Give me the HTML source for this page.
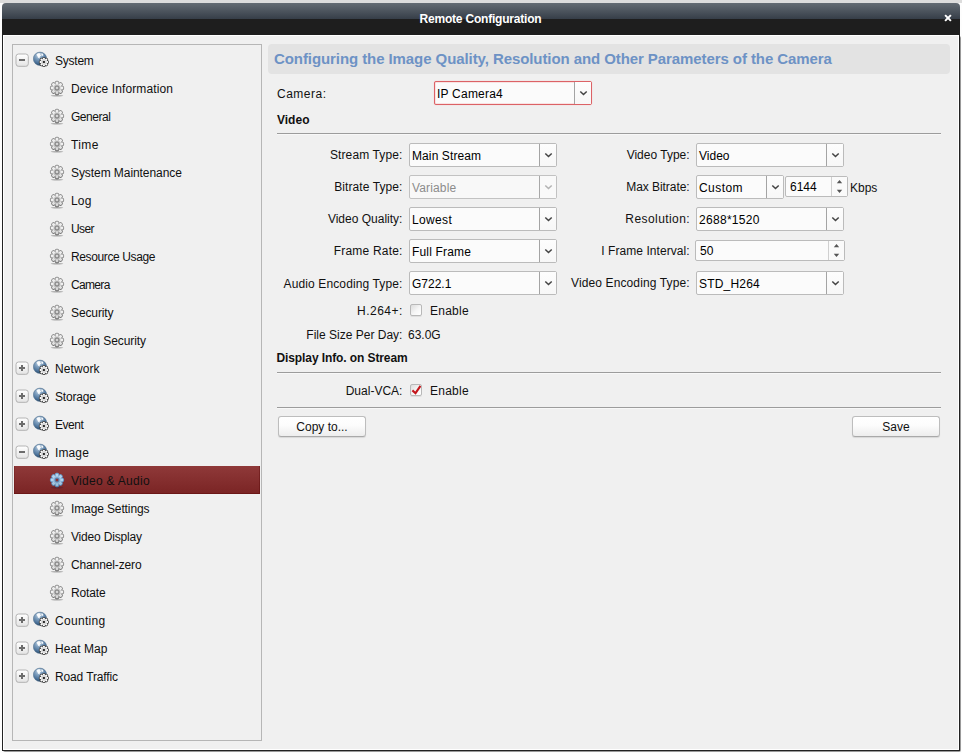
<!DOCTYPE html>
<html>
<head>
<meta charset="utf-8">
<title>Remote Configuration</title>
<style>
*{box-sizing:border-box;margin:0;padding:0}
html,body{width:962px;height:753px;overflow:hidden;background:#fdfdfd;font-family:"Liberation Sans",sans-serif;font-size:12px;color:#000}
.abs{position:absolute}
#topstrip{left:0;top:0;width:962px;height:3px;background:#dcdcdc}
#win{left:2px;top:3px;width:958px;height:748px;background:#f0f0f0;border-radius:4px 4px 0 0;overflow:hidden}
#winsh{left:3px;top:36px;width:958px;height:716px;background:#9a9a9a;border-radius:2px}
#win:before{content:"";position:absolute;left:0;top:32px;right:0;bottom:0;border:1px solid #222;border-top:none;box-shadow:inset 0 1px 0 #fff,inset 1px 0 0 #fff,inset -1px 0 0 #fff,inset 0 -1px 0 #fff}
#tb1{left:0;top:0;width:100%;height:16px;background:linear-gradient(#636b73,#363e48)}
#tb2{left:0;top:16px;width:100%;height:16px;background:#1e1e1e}
#title{left:0;top:9px;width:957px;text-align:center;color:#fff;font-weight:bold;font-size:12px;line-height:14px;letter-spacing:-0.2px}
#close{left:941.5px;top:11.1px;width:8px;height:8px}
#side{left:12px;top:44px;width:250px;height:697px;border:1px solid #b6b6b6;background:#f0f0f0}
.row{position:absolute;left:1px;width:246px;height:28px;line-height:28px;font-size:12px;color:#111;white-space:nowrap}
.row.sel{background:linear-gradient(#8f3939,#7a2424);box-shadow:inset -1px -1px 0 rgba(80,0,0,.35),inset 1px 0 0 rgba(80,0,0,.2)}
.row span{position:absolute;top:1px}
.p span{left:41px}
.c span{left:57px}
.exp{position:absolute;left:0;top:6px;width:18px;height:18px}
.globe{position:absolute;left:19px;top:5px;width:18px;height:18px}
.gear{position:absolute;left:35px;top:6px;width:16px;height:17px}
#banner{left:268px;top:44px;width:682px;height:30px;background:#e3e3e3;border-radius:4px;color:#6d92c5;font-weight:bold;font-size:15px;line-height:30px;padding-left:6px;white-space:nowrap;letter-spacing:-0.081px}
.lbl{position:absolute;height:20px;line-height:20px;white-space:nowrap;color:#111}
.r{text-align:right}
.h{font-weight:bold}
.hr{position:absolute;height:2px;border-top:1px solid #9c9c9c;border-bottom:1px solid #f8f8f8}
.sel2{position:absolute;height:24px;border:1px solid #bbb;border-radius:2px;background:#fbfbfb;line-height:25px;padding-left:2px;white-space:nowrap;color:#000}
.sel2 .a{position:absolute;right:0;top:0;width:17px;height:22px;border-left:1px solid #a4a4a4;background:linear-gradient(#fdfdfd,#f7f7f7)}
.sel2 .a svg{position:absolute;left:4px;top:8px}
.sel2.cam{border-color:#dc6266;box-shadow:0 0 1px 0 #eeaaaa,inset 0 0 0 1px #f9e3e3}
.sel2.dis{color:#8c8c8c;background:#f8f8f8;border-color:#c2c2c2}
.sel2.dis .a{background:#f9f9f9;border-left-color:#a8a8a8}
.sel2.dis .a svg{opacity:.38}
.spin{position:absolute;height:21px;border:1px solid #bbb;border-radius:2px;background:#fbfbfb;line-height:21px;padding-left:4px}
.spin .s{position:absolute;right:0;top:0;width:16px;height:19px;border-left:1px solid #d0d0d0;background:#fafafa}
.cb{position:absolute;width:12px;height:12px;border:1px solid #b8b8b8;border-radius:2px;background:linear-gradient(135deg,#dcdcdc,#f6f6f6 55%,#fff);box-shadow:0 1px 0 rgba(0,0,0,.07)}
.btn{position:absolute;height:21px;border:1px solid #bdbdbd;border-bottom-color:#a9a9a9;border-radius:3px;background:linear-gradient(#fff,#fcfcfc 45%,#ededed);box-shadow:0 1px 1px rgba(0,0,0,.10);text-align:center;line-height:21px;color:#111}
</style>
</head>
<body>
<div class="abs" id="topstrip"></div>
<div class="abs" id="winsh"></div>
<div class="abs" id="win">
  <div class="abs" id="tb1"></div>
  <div class="abs" id="tb2"></div>
  <div class="abs" id="title">Remote Configuration</div>
  <svg class="abs" id="close" viewBox="0 0 8 8"><path d="M1.1 1.1L6.9 6.9M6.9 1.1L1.1 6.9" stroke="#fff" stroke-width="2"/></svg>
</div>
<div class="abs" id="side">
<svg width="0" height="0" style="position:absolute"><defs><radialGradient id="gg" cx="0.4" cy="0.25" r="0.8"><stop offset="0" stop-color="#c3d3e2"/><stop offset="0.35" stop-color="#7b9cbc"/><stop offset="0.7" stop-color="#4a7199"/><stop offset="1" stop-color="#243f5a"/></radialGradient><symbol id="gear" viewBox="-8 -8 16 17"><clipPath id="cpgear"><path d="M-2.3 -2.6L-2.3 -5.48Q-2.3 -7.2 -0.57 -7.2L0.57 -7.2Q2.3 -7.2 2.3 -5.48L2.3 -2.6Z" transform="rotate(0.0)"/><path d="M-2.3 -2.6L-2.3 -5.48Q-2.3 -7.2 -0.57 -7.2L0.57 -7.2Q2.3 -7.2 2.3 -5.48L2.3 -2.6Z" transform="rotate(45.0)"/><path d="M-2.3 -2.6L-2.3 -5.48Q-2.3 -7.2 -0.57 -7.2L0.57 -7.2Q2.3 -7.2 2.3 -5.48L2.3 -2.6Z" transform="rotate(90.0)"/><path d="M-2.3 -2.6L-2.3 -5.48Q-2.3 -7.2 -0.57 -7.2L0.57 -7.2Q2.3 -7.2 2.3 -5.48L2.3 -2.6Z" transform="rotate(135.0)"/><path d="M-2.3 -2.6L-2.3 -5.48Q-2.3 -7.2 -0.57 -7.2L0.57 -7.2Q2.3 -7.2 2.3 -5.48L2.3 -2.6Z" transform="rotate(180.0)"/><path d="M-2.3 -2.6L-2.3 -5.48Q-2.3 -7.2 -0.57 -7.2L0.57 -7.2Q2.3 -7.2 2.3 -5.48L2.3 -2.6Z" transform="rotate(225.0)"/><path d="M-2.3 -2.6L-2.3 -5.48Q-2.3 -7.2 -0.57 -7.2L0.57 -7.2Q2.3 -7.2 2.3 -5.48L2.3 -2.6Z" transform="rotate(270.0)"/><path d="M-2.3 -2.6L-2.3 -5.48Q-2.3 -7.2 -0.57 -7.2L0.57 -7.2Q2.3 -7.2 2.3 -5.48L2.3 -2.6Z" transform="rotate(315.0)"/><circle r="4"/></clipPath><ellipse cx="0" cy="7.75" rx="6.3" ry="0.65" fill="#000" opacity="0.3"/><g stroke="#858585" stroke-width="1.7" fill="#858585" stroke-linejoin="round"><path d="M-1.4 -2.6L-1.4 -5.25Q-1.4 -6.3 -0.35 -6.3L0.35 -6.3Q1.4 -6.3 1.4 -5.25L1.4 -2.6Z" transform="rotate(0.0)"/><path d="M-1.4 -2.6L-1.4 -5.25Q-1.4 -6.3 -0.35 -6.3L0.35 -6.3Q1.4 -6.3 1.4 -5.25L1.4 -2.6Z" transform="rotate(45.0)"/><path d="M-1.4 -2.6L-1.4 -5.25Q-1.4 -6.3 -0.35 -6.3L0.35 -6.3Q1.4 -6.3 1.4 -5.25L1.4 -2.6Z" transform="rotate(90.0)"/><path d="M-1.4 -2.6L-1.4 -5.25Q-1.4 -6.3 -0.35 -6.3L0.35 -6.3Q1.4 -6.3 1.4 -5.25L1.4 -2.6Z" transform="rotate(135.0)"/><path d="M-1.4 -2.6L-1.4 -5.25Q-1.4 -6.3 -0.35 -6.3L0.35 -6.3Q1.4 -6.3 1.4 -5.25L1.4 -2.6Z" transform="rotate(180.0)"/><path d="M-1.4 -2.6L-1.4 -5.25Q-1.4 -6.3 -0.35 -6.3L0.35 -6.3Q1.4 -6.3 1.4 -5.25L1.4 -2.6Z" transform="rotate(225.0)"/><path d="M-1.4 -2.6L-1.4 -5.25Q-1.4 -6.3 -0.35 -6.3L0.35 -6.3Q1.4 -6.3 1.4 -5.25L1.4 -2.6Z" transform="rotate(270.0)"/><path d="M-1.4 -2.6L-1.4 -5.25Q-1.4 -6.3 -0.35 -6.3L0.35 -6.3Q1.4 -6.3 1.4 -5.25L1.4 -2.6Z" transform="rotate(315.0)"/></g><g fill="#f3f3f3"><path d="M-1.4 -2.6L-1.4 -5.25Q-1.4 -6.3 -0.35 -6.3L0.35 -6.3Q1.4 -6.3 1.4 -5.25L1.4 -2.6Z" transform="rotate(0.0)"/><path d="M-1.4 -2.6L-1.4 -5.25Q-1.4 -6.3 -0.35 -6.3L0.35 -6.3Q1.4 -6.3 1.4 -5.25L1.4 -2.6Z" transform="rotate(45.0)"/><path d="M-1.4 -2.6L-1.4 -5.25Q-1.4 -6.3 -0.35 -6.3L0.35 -6.3Q1.4 -6.3 1.4 -5.25L1.4 -2.6Z" transform="rotate(90.0)"/><path d="M-1.4 -2.6L-1.4 -5.25Q-1.4 -6.3 -0.35 -6.3L0.35 -6.3Q1.4 -6.3 1.4 -5.25L1.4 -2.6Z" transform="rotate(135.0)"/><path d="M-1.4 -2.6L-1.4 -5.25Q-1.4 -6.3 -0.35 -6.3L0.35 -6.3Q1.4 -6.3 1.4 -5.25L1.4 -2.6Z" transform="rotate(180.0)"/><path d="M-1.4 -2.6L-1.4 -5.25Q-1.4 -6.3 -0.35 -6.3L0.35 -6.3Q1.4 -6.3 1.4 -5.25L1.4 -2.6Z" transform="rotate(225.0)"/><path d="M-1.4 -2.6L-1.4 -5.25Q-1.4 -6.3 -0.35 -6.3L0.35 -6.3Q1.4 -6.3 1.4 -5.25L1.4 -2.6Z" transform="rotate(270.0)"/><path d="M-1.4 -2.6L-1.4 -5.25Q-1.4 -6.3 -0.35 -6.3L0.35 -6.3Q1.4 -6.3 1.4 -5.25L1.4 -2.6Z" transform="rotate(315.0)"/></g><circle r="3.5" fill="#c2c2c2"/><circle r="2" fill="#d6d6d6" stroke="#787878" stroke-width="1"/><rect x="-8" y="-8" width="16" height="16" fill="url(#shg)" clip-path="url(#cpgear)"/></symbol><symbol id="gearsel" viewBox="-8 -8 16 17"><clipPath id="cpgearsel"><path d="M-2.3 -2.6L-2.3 -5.48Q-2.3 -7.2 -0.57 -7.2L0.57 -7.2Q2.3 -7.2 2.3 -5.48L2.3 -2.6Z" transform="rotate(0.0)"/><path d="M-2.3 -2.6L-2.3 -5.48Q-2.3 -7.2 -0.57 -7.2L0.57 -7.2Q2.3 -7.2 2.3 -5.48L2.3 -2.6Z" transform="rotate(45.0)"/><path d="M-2.3 -2.6L-2.3 -5.48Q-2.3 -7.2 -0.57 -7.2L0.57 -7.2Q2.3 -7.2 2.3 -5.48L2.3 -2.6Z" transform="rotate(90.0)"/><path d="M-2.3 -2.6L-2.3 -5.48Q-2.3 -7.2 -0.57 -7.2L0.57 -7.2Q2.3 -7.2 2.3 -5.48L2.3 -2.6Z" transform="rotate(135.0)"/><path d="M-2.3 -2.6L-2.3 -5.48Q-2.3 -7.2 -0.57 -7.2L0.57 -7.2Q2.3 -7.2 2.3 -5.48L2.3 -2.6Z" transform="rotate(180.0)"/><path d="M-2.3 -2.6L-2.3 -5.48Q-2.3 -7.2 -0.57 -7.2L0.57 -7.2Q2.3 -7.2 2.3 -5.48L2.3 -2.6Z" transform="rotate(225.0)"/><path d="M-2.3 -2.6L-2.3 -5.48Q-2.3 -7.2 -0.57 -7.2L0.57 -7.2Q2.3 -7.2 2.3 -5.48L2.3 -2.6Z" transform="rotate(270.0)"/><path d="M-2.3 -2.6L-2.3 -5.48Q-2.3 -7.2 -0.57 -7.2L0.57 -7.2Q2.3 -7.2 2.3 -5.48L2.3 -2.6Z" transform="rotate(315.0)"/><circle r="4"/></clipPath><ellipse cx="0" cy="7.75" rx="6.3" ry="0.65" fill="#101840" opacity="0.3"/><g stroke="#5e90c2" stroke-width="1.7" fill="#5e90c2" stroke-linejoin="round"><path d="M-1.4 -2.6L-1.4 -5.25Q-1.4 -6.3 -0.35 -6.3L0.35 -6.3Q1.4 -6.3 1.4 -5.25L1.4 -2.6Z" transform="rotate(0.0)"/><path d="M-1.4 -2.6L-1.4 -5.25Q-1.4 -6.3 -0.35 -6.3L0.35 -6.3Q1.4 -6.3 1.4 -5.25L1.4 -2.6Z" transform="rotate(45.0)"/><path d="M-1.4 -2.6L-1.4 -5.25Q-1.4 -6.3 -0.35 -6.3L0.35 -6.3Q1.4 -6.3 1.4 -5.25L1.4 -2.6Z" transform="rotate(90.0)"/><path d="M-1.4 -2.6L-1.4 -5.25Q-1.4 -6.3 -0.35 -6.3L0.35 -6.3Q1.4 -6.3 1.4 -5.25L1.4 -2.6Z" transform="rotate(135.0)"/><path d="M-1.4 -2.6L-1.4 -5.25Q-1.4 -6.3 -0.35 -6.3L0.35 -6.3Q1.4 -6.3 1.4 -5.25L1.4 -2.6Z" transform="rotate(180.0)"/><path d="M-1.4 -2.6L-1.4 -5.25Q-1.4 -6.3 -0.35 -6.3L0.35 -6.3Q1.4 -6.3 1.4 -5.25L1.4 -2.6Z" transform="rotate(225.0)"/><path d="M-1.4 -2.6L-1.4 -5.25Q-1.4 -6.3 -0.35 -6.3L0.35 -6.3Q1.4 -6.3 1.4 -5.25L1.4 -2.6Z" transform="rotate(270.0)"/><path d="M-1.4 -2.6L-1.4 -5.25Q-1.4 -6.3 -0.35 -6.3L0.35 -6.3Q1.4 -6.3 1.4 -5.25L1.4 -2.6Z" transform="rotate(315.0)"/></g><g fill="#b2d4ef"><path d="M-1.4 -2.6L-1.4 -5.25Q-1.4 -6.3 -0.35 -6.3L0.35 -6.3Q1.4 -6.3 1.4 -5.25L1.4 -2.6Z" transform="rotate(0.0)"/><path d="M-1.4 -2.6L-1.4 -5.25Q-1.4 -6.3 -0.35 -6.3L0.35 -6.3Q1.4 -6.3 1.4 -5.25L1.4 -2.6Z" transform="rotate(45.0)"/><path d="M-1.4 -2.6L-1.4 -5.25Q-1.4 -6.3 -0.35 -6.3L0.35 -6.3Q1.4 -6.3 1.4 -5.25L1.4 -2.6Z" transform="rotate(90.0)"/><path d="M-1.4 -2.6L-1.4 -5.25Q-1.4 -6.3 -0.35 -6.3L0.35 -6.3Q1.4 -6.3 1.4 -5.25L1.4 -2.6Z" transform="rotate(135.0)"/><path d="M-1.4 -2.6L-1.4 -5.25Q-1.4 -6.3 -0.35 -6.3L0.35 -6.3Q1.4 -6.3 1.4 -5.25L1.4 -2.6Z" transform="rotate(180.0)"/><path d="M-1.4 -2.6L-1.4 -5.25Q-1.4 -6.3 -0.35 -6.3L0.35 -6.3Q1.4 -6.3 1.4 -5.25L1.4 -2.6Z" transform="rotate(225.0)"/><path d="M-1.4 -2.6L-1.4 -5.25Q-1.4 -6.3 -0.35 -6.3L0.35 -6.3Q1.4 -6.3 1.4 -5.25L1.4 -2.6Z" transform="rotate(270.0)"/><path d="M-1.4 -2.6L-1.4 -5.25Q-1.4 -6.3 -0.35 -6.3L0.35 -6.3Q1.4 -6.3 1.4 -5.25L1.4 -2.6Z" transform="rotate(315.0)"/></g><circle r="3.5" fill="#8db6da"/><circle r="2" fill="#8f3232" stroke="#5488bc" stroke-width="1"/><rect x="-8" y="-8" width="16" height="16" fill="url(#shb)" clip-path="url(#cpgearsel)"/></symbol><symbol id="globe" viewBox="0 0 18 18"><circle cx="7" cy="7.8" r="6.7" fill="url(#gg)" stroke="#4a6a88" stroke-width="0.5"/><path d="M3.4 3.8 L5 2.3 L7.6 2.3 L7.2 3.6 L8.2 4.2 L7 5.6 L6.4 7.4 L5 6.6 L4.4 5 Z M8 2.4 L10 2.8 L10.4 4.4 L8.8 5 L8.4 3.6 Z" fill="#fdfeff" opacity="0.95"/><g transform="translate(10.9 11)"><g stroke="#363636" stroke-width="1.5" fill="#363636" stroke-linejoin="round"><path d="M-1.0 -1.6L-1.0 -3.60Q-1.0 -4.35 -0.25 -4.35L0.25 -4.35Q1.0 -4.35 1.0 -3.60L1.0 -1.6Z" transform="rotate(0.0)"/><path d="M-1.0 -1.6L-1.0 -3.60Q-1.0 -4.35 -0.25 -4.35L0.25 -4.35Q1.0 -4.35 1.0 -3.60L1.0 -1.6Z" transform="rotate(45.0)"/><path d="M-1.0 -1.6L-1.0 -3.60Q-1.0 -4.35 -0.25 -4.35L0.25 -4.35Q1.0 -4.35 1.0 -3.60L1.0 -1.6Z" transform="rotate(90.0)"/><path d="M-1.0 -1.6L-1.0 -3.60Q-1.0 -4.35 -0.25 -4.35L0.25 -4.35Q1.0 -4.35 1.0 -3.60L1.0 -1.6Z" transform="rotate(135.0)"/><path d="M-1.0 -1.6L-1.0 -3.60Q-1.0 -4.35 -0.25 -4.35L0.25 -4.35Q1.0 -4.35 1.0 -3.60L1.0 -1.6Z" transform="rotate(180.0)"/><path d="M-1.0 -1.6L-1.0 -3.60Q-1.0 -4.35 -0.25 -4.35L0.25 -4.35Q1.0 -4.35 1.0 -3.60L1.0 -1.6Z" transform="rotate(225.0)"/><path d="M-1.0 -1.6L-1.0 -3.60Q-1.0 -4.35 -0.25 -4.35L0.25 -4.35Q1.0 -4.35 1.0 -3.60L1.0 -1.6Z" transform="rotate(270.0)"/><path d="M-1.0 -1.6L-1.0 -3.60Q-1.0 -4.35 -0.25 -4.35L0.25 -4.35Q1.0 -4.35 1.0 -3.60L1.0 -1.6Z" transform="rotate(315.0)"/><circle r="3"/></g><g fill="#fff"><path d="M-1.0 -1.6L-1.0 -3.60Q-1.0 -4.35 -0.25 -4.35L0.25 -4.35Q1.0 -4.35 1.0 -3.60L1.0 -1.6Z" transform="rotate(0.0)"/><path d="M-1.0 -1.6L-1.0 -3.60Q-1.0 -4.35 -0.25 -4.35L0.25 -4.35Q1.0 -4.35 1.0 -3.60L1.0 -1.6Z" transform="rotate(45.0)"/><path d="M-1.0 -1.6L-1.0 -3.60Q-1.0 -4.35 -0.25 -4.35L0.25 -4.35Q1.0 -4.35 1.0 -3.60L1.0 -1.6Z" transform="rotate(90.0)"/><path d="M-1.0 -1.6L-1.0 -3.60Q-1.0 -4.35 -0.25 -4.35L0.25 -4.35Q1.0 -4.35 1.0 -3.60L1.0 -1.6Z" transform="rotate(135.0)"/><path d="M-1.0 -1.6L-1.0 -3.60Q-1.0 -4.35 -0.25 -4.35L0.25 -4.35Q1.0 -4.35 1.0 -3.60L1.0 -1.6Z" transform="rotate(180.0)"/><path d="M-1.0 -1.6L-1.0 -3.60Q-1.0 -4.35 -0.25 -4.35L0.25 -4.35Q1.0 -4.35 1.0 -3.60L1.0 -1.6Z" transform="rotate(225.0)"/><path d="M-1.0 -1.6L-1.0 -3.60Q-1.0 -4.35 -0.25 -4.35L0.25 -4.35Q1.0 -4.35 1.0 -3.60L1.0 -1.6Z" transform="rotate(270.0)"/><path d="M-1.0 -1.6L-1.0 -3.60Q-1.0 -4.35 -0.25 -4.35L0.25 -4.35Q1.0 -4.35 1.0 -3.60L1.0 -1.6Z" transform="rotate(315.0)"/></g><circle r="2.9" fill="#d9d9d9"/><rect x="-1" y="-1" width="2" height="2" fill="#2a2a2a"/></g></symbol><linearGradient id="eg" x1="0" y1="0" x2="0" y2="1"><stop offset="0" stop-color="#ffffff"/><stop offset="1" stop-color="#e4e4e4"/></linearGradient><linearGradient id="shg" x1="0" y1="0" x2="0" y2="1"><stop offset="0" stop-color="#fff" stop-opacity="0.22"/><stop offset="0.45" stop-color="#888" stop-opacity="0"/><stop offset="1" stop-color="#000" stop-opacity="0.22"/></linearGradient><linearGradient id="shb" x1="0" y1="0" x2="0" y2="1"><stop offset="0" stop-color="#fff" stop-opacity="0.15"/><stop offset="0.45" stop-color="#888" stop-opacity="0"/><stop offset="1" stop-color="#024" stop-opacity="0.25"/></linearGradient><symbol id="minus" viewBox="0 0 18 18"><rect x="2.1" y="2.6" width="12.2" height="12.2" rx="2.6" fill="rgba(0,0,0,.10)"/><rect x="2" y="2" width="12.3" height="12.3" rx="2.6" fill="url(#eg)" stroke="#b4b4b4"/><rect x="5" y="7" width="6" height="2" fill="#6c6c6c"/></symbol><symbol id="plus" viewBox="0 0 18 18"><rect x="2.1" y="2.6" width="12.2" height="12.2" rx="2.6" fill="rgba(0,0,0,.10)"/><rect x="2" y="2" width="12.3" height="12.3" rx="2.6" fill="url(#eg)" stroke="#b4b4b4"/><rect x="5" y="7" width="6" height="2" fill="#6c6c6c"/><rect x="7" y="5" width="2" height="6" fill="#6c6c6c"/></symbol></defs></svg>
<div class="row p" style="top:1px"><svg class="exp"><use href="#minus"/></svg><svg class="globe"><use href="#globe"/></svg><span style="letter-spacing:-0.24px">System</span></div>
<div class="row c" style="top:29px"><svg class="gear"><use href="#gear"/></svg><span style="letter-spacing:0.11px">Device Information</span></div>
<div class="row c" style="top:57px"><svg class="gear"><use href="#gear"/></svg><span style="letter-spacing:-0.47px">General</span></div>
<div class="row c" style="top:85px"><svg class="gear"><use href="#gear"/></svg><span style="letter-spacing:0.37px">Time</span></div>
<div class="row c" style="top:113px"><svg class="gear"><use href="#gear"/></svg><span style="letter-spacing:-0.07px">System Maintenance</span></div>
<div class="row c" style="top:141px"><svg class="gear"><use href="#gear"/></svg><span style="letter-spacing:0.15px">Log</span></div>
<div class="row c" style="top:169px"><svg class="gear"><use href="#gear"/></svg><span style="letter-spacing:-0.63px">User</span></div>
<div class="row c" style="top:197px"><svg class="gear"><use href="#gear"/></svg><span style="letter-spacing:-0.38px">Resource Usage</span></div>
<div class="row c" style="top:225px"><svg class="gear"><use href="#gear"/></svg><span style="letter-spacing:-0.66px">Camera</span></div>
<div class="row c" style="top:253px"><svg class="gear"><use href="#gear"/></svg><span style="letter-spacing:-0.11px">Security</span></div>
<div class="row c" style="top:281px"><svg class="gear"><use href="#gear"/></svg><span style="letter-spacing:-0.08px">Login Security</span></div>
<div class="row p" style="top:309px"><svg class="exp"><use href="#plus"/></svg><svg class="globe"><use href="#globe"/></svg><span style="letter-spacing:0.10px">Network</span></div>
<div class="row p" style="top:337px"><svg class="exp"><use href="#plus"/></svg><svg class="globe"><use href="#globe"/></svg><span style="letter-spacing:-0.17px">Storage</span></div>
<div class="row p" style="top:365px"><svg class="exp"><use href="#plus"/></svg><svg class="globe"><use href="#globe"/></svg><span style="letter-spacing:-0.45px">Event</span></div>
<div class="row p" style="top:393px"><svg class="exp"><use href="#minus"/></svg><svg class="globe"><use href="#globe"/></svg><span style="letter-spacing:0.12px">Image</span></div>
<div class="row c sel" style="top:421px"><svg class="gear"><use href="#gearsel"/></svg><span style="letter-spacing:0.29px">Video &amp; Audio</span></div>
<div class="row c" style="top:449px"><svg class="gear"><use href="#gear"/></svg><span style="letter-spacing:-0.12px">Image Settings</span></div>
<div class="row c" style="top:477px"><svg class="gear"><use href="#gear"/></svg><span style="letter-spacing:-0.17px">Video Display</span></div>
<div class="row c" style="top:505px"><svg class="gear"><use href="#gear"/></svg><span style="letter-spacing:-0.13px">Channel-zero</span></div>
<div class="row c" style="top:533px"><svg class="gear"><use href="#gear"/></svg><span style="letter-spacing:-0.12px">Rotate</span></div>
<div class="row p" style="top:561px"><svg class="exp"><use href="#plus"/></svg><svg class="globe"><use href="#globe"/></svg><span style="letter-spacing:0.31px">Counting</span></div>
<div class="row p" style="top:589px"><svg class="exp"><use href="#plus"/></svg><svg class="globe"><use href="#globe"/></svg><span style="letter-spacing:0.04px">Heat Map</span></div>
<div class="row p" style="top:617px"><svg class="exp"><use href="#plus"/></svg><svg class="globe"><use href="#globe"/></svg><span style="letter-spacing:-0.13px">Road Traffic</span></div>
</div>
<div class="abs" id="banner">Configuring the Image Quality, Resolution and Other Parameters of the Camera</div>
<div id="form">
<div class="lbl" style="left:277px;top:84px;letter-spacing:0.5px">Camera:</div>
<div class="sel2 cam" style="left:434px;top:81px;width:158px;letter-spacing:0.22px">IP Camera4<div class="a"><svg width="9" height="6" viewBox="0 0 9 6"><path d="M1.3 1.5L4.5 4.5L7.7 1.5" fill="none" stroke="#444" stroke-width="1.55"/></svg></div></div>
<div class="lbl h" style="left:277px;top:110px">Video</div>
<div class="hr" style="left:277px;top:133px;width:664px"></div>
<div class="lbl r" style="left:202.52px;width:200px;top:145px;letter-spacing:0.12px">Stream Type:</div>
<div class="sel2" style="left:409px;top:143px;width:148px;letter-spacing:0.1px">Main Stream<div class="a"><svg width="9" height="6" viewBox="0 0 9 6"><path d="M1.3 1.5L4.5 4.5L7.7 1.5" fill="none" stroke="#444" stroke-width="1.55"/></svg></div></div>
<div class="lbl r" style="left:489.60px;width:200px;top:145px">Video Type:</div>
<div class="sel2" style="left:696px;top:143px;width:148px">Video<div class="a"><svg width="9" height="6" viewBox="0 0 9 6"><path d="M1.3 1.5L4.5 4.5L7.7 1.5" fill="none" stroke="#444" stroke-width="1.55"/></svg></div></div>
<div class="lbl r" style="left:202.48px;width:200px;top:177px;letter-spacing:0.08px">Bitrate Type:</div>
<div class="sel2 dis" style="left:409px;top:175px;width:148px;letter-spacing:0.15px">Variable<div class="a"><svg width="9" height="6" viewBox="0 0 9 6"><path d="M1.3 1.5L4.5 4.5L7.7 1.5" fill="none" stroke="#444" stroke-width="1.55"/></svg></div></div>
<div class="lbl r" style="left:489.53px;width:200px;top:177px;letter-spacing:-0.07px">Max Bitrate:</div>
<div class="lbl r" style="left:202.40px;width:200px;top:209px">Video Quality:</div>
<div class="sel2" style="left:409px;top:207px;width:148px;letter-spacing:0.35px">Lowest<div class="a"><svg width="9" height="6" viewBox="0 0 9 6"><path d="M1.3 1.5L4.5 4.5L7.7 1.5" fill="none" stroke="#444" stroke-width="1.55"/></svg></div></div>
<div class="lbl r" style="left:490.02px;width:200px;top:209px;letter-spacing:0.42px">Resolution:</div>
<div class="sel2" style="left:696px;top:207px;width:148px;letter-spacing:0.3px">2688*1520<div class="a"><svg width="9" height="6" viewBox="0 0 9 6"><path d="M1.3 1.5L4.5 4.5L7.7 1.5" fill="none" stroke="#444" stroke-width="1.55"/></svg></div></div>
<div class="lbl r" style="left:202.60px;width:200px;top:241px;letter-spacing:0.2px">Frame Rate:</div>
<div class="sel2" style="left:409px;top:239px;width:148px;letter-spacing:0.18px">Full Frame<div class="a"><svg width="9" height="6" viewBox="0 0 9 6"><path d="M1.3 1.5L4.5 4.5L7.7 1.5" fill="none" stroke="#444" stroke-width="1.55"/></svg></div></div>
<div class="lbl r" style="left:489.66px;width:200px;top:241px;letter-spacing:0.06px">I Frame Interval:</div>
<div class="lbl r" style="left:202.52px;width:200px;top:274px;letter-spacing:0.12px">Audio Encoding Type:</div>
<div class="sel2" style="left:409px;top:271px;width:148px">G722.1<div class="a"><svg width="9" height="6" viewBox="0 0 9 6"><path d="M1.3 1.5L4.5 4.5L7.7 1.5" fill="none" stroke="#444" stroke-width="1.55"/></svg></div></div>
<div class="lbl r" style="left:489.72px;width:200px;top:273px;letter-spacing:0.12px">Video Encoding Type:</div>
<div class="sel2" style="left:696px;top:271px;width:148px;letter-spacing:0.2px">STD_H264<div class="a"><svg width="9" height="6" viewBox="0 0 9 6"><path d="M1.3 1.5L4.5 4.5L7.7 1.5" fill="none" stroke="#444" stroke-width="1.55"/></svg></div></div>
<div class="sel2" style="left:696px;top:175px;width:88px;letter-spacing:0.45px">Custom<div class="a"><svg width="9" height="6" viewBox="0 0 9 6"><path d="M1.3 1.5L4.5 4.5L7.7 1.5" fill="none" stroke="#444" stroke-width="1.55"/></svg></div></div>
<div class="spin" style="left:785px;top:176px;width:63px">6144<div class="s"><svg width="15" height="19" viewBox="0 0 15 19"><path d="M4.8 6.2L7.5 2.9L10.2 6.2Z M4.8 12.8L7.5 16.1L10.2 12.8Z" fill="#555"/></svg></div></div>
<div class="lbl" style="left:850px;top:178px">Kbps</div>
<div class="spin" style="left:695px;top:240px;width:150px">50<div class="s"><svg width="15" height="19" viewBox="0 0 15 19"><path d="M4.8 6.2L7.5 2.9L10.2 6.2Z M4.8 12.8L7.5 16.1L10.2 12.8Z" fill="#555"/></svg></div></div>
<div class="lbl r" style="left:202.90px;width:200px;top:301px;letter-spacing:0.5px">H.264+:</div>
<div class="cb" style="left:410px;top:304px"></div>
<div class="lbl" style="left:430px;top:301px;letter-spacing:0.25px">Enable</div>
<div class="lbl r" style="left:202.40px;width:200px;top:325px">File Size Per Day:</div>
<div class="lbl" style="left:408px;top:325px">63.0G</div>
<div class="lbl h" style="left:276.5px;top:348px;letter-spacing:-0.1px">Display Info. on Stream</div>
<div class="hr" style="left:277px;top:372px;width:664px"></div>
<div class="lbl r" style="left:202.40px;width:200px;top:381px">Dual-VCA:</div>
<div class="cb" style="left:410px;top:384px"><svg width="10" height="10" viewBox="0 0 10 10" style="position:absolute;left:0;top:0"><path d="M1.4 5.4L4.5 8.2L9.5 0.8" fill="none" stroke="#c4161c" stroke-width="2.1" stroke-linejoin="miter"/></svg></div>
<div class="lbl" style="left:430px;top:381px;letter-spacing:0.25px">Enable</div>
<div class="hr" style="left:277px;top:407px;width:664px"></div>
<div class="btn" style="left:278px;top:416px;width:88px">Copy to...</div>
<div class="btn" style="left:852px;top:416px;width:88px">Save</div>
</div>
</body>
</html>
